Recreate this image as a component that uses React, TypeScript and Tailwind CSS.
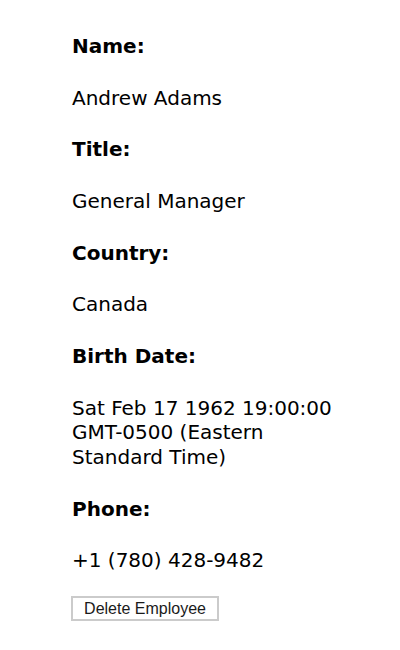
import React from 'react';

const fields: { label: string; value: string }[] = [
  { label: 'Name:', value: 'Andrew Adams' },
  { label: 'Title:', value: 'General Manager' },
  { label: 'Country:', value: 'Canada' },
  { label: 'Birth Date:', value: 'Sat Feb 17 1962 19:00:00 GMT-0500 (Eastern Standard Time)' },
  { label: 'Phone:', value: '+1 (780) 428-9482' },
];

export default function App() {
  return (
    <div className="min-h-[650px] bg-white text-black font-['DejaVu_Sans',sans-serif]">
      <div className="ml-[72px] w-[276px] pt-[34px] flex flex-col gap-[27.2px] text-[20px] leading-[24.5px]">
        {fields.map((f) => (
          <React.Fragment key={f.label}>
            <div className="font-bold">{f.label}</div>
            <div>{f.value}</div>
          </React.Fragment>
        ))}
      </div>
      <div className="ml-[71px] mt-[23px]">
        <button className="h-[25px] w-[148px] border-2 border-[#cbcbcb] bg-white text-[16px] leading-[19px] text-[#1a1a1a] font-['Liberation_Sans',Arial,sans-serif]">
          Delete Employee
        </button>
      </div>
    </div>
  );
}
